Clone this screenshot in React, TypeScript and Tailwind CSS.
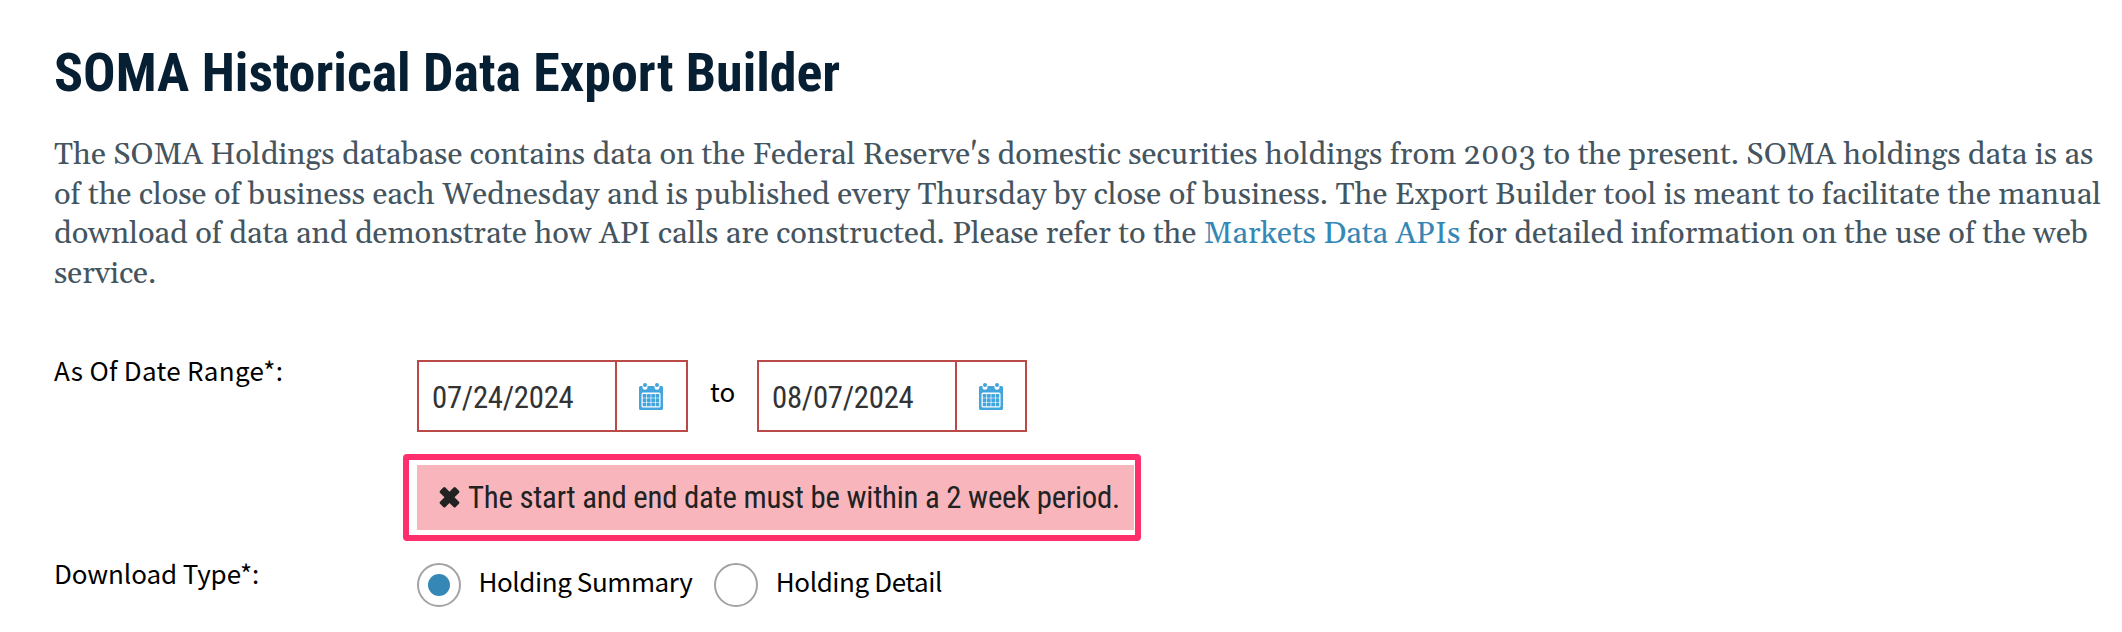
import { clsx } from 'clsx';

function CalendarIcon() {
  return (
    <svg width="24" height="27" viewBox="0 0 24 27" fill="none">
      <path d="M1.500 3h21A1.500 1.500 0 0 1 24 4.500v21a1.500 1.500 0 0 1-1.500 1.500h-21A1.500 1.500 0 0 1 0 25.500v-21A1.500 1.500 0 0 1 1.500 3z" fill="#42a5de" />
      <path d="M3.500 2h5v2.500a2.500 2.200 0 0 1-5 0zM15.500 2h5v2.500a2.500 2.200 0 0 1-5 0z" fill="#fff" />
      <circle cx="6" cy="2" r="2" fill="#42a5de" />
      <circle cx="18" cy="2" r="2" fill="#42a5de" />
      <rect x="2.500" y="9.500" width="19" height="15" rx="1.500" fill="#fff" />
      {[11, 15.3, 19.6].map((y) =>
        [3.7, 8, 12.3, 16.6].map((x) => (
          <rect key={`${x}-${y}`} x={x} y={y} width="3.700" height="3.700" rx="0.400" fill="#42a5de" />
        ))
      )}
    </svg>
  );
}

function DateField({ value, className }: { value: string; className?: string }) {
  return (
    <div className={clsx('flex h-[72px] border-2 border-[#b94a48] bg-white', className)}>
      <div className="flex w-[198px] items-center border-r-2 border-[#b94a48] pt-1 pl-[13px]">
        <span className="text-[30.8px] leading-[68px] tracking-[-0.3px] text-[#333] font-['Roboto_Condensed',Roboto,sans-serif]">
          {value}
        </span>
      </div>
      <div className="flex flex-1 items-center pt-px pl-[22px]">
        <CalendarIcon />
      </div>
    </div>
  );
}

function Radio({ label, checked }: { label: string; checked?: boolean }) {
  return (
    <label className="flex">
      <span className="flex size-11 items-center justify-center rounded-full border-2 border-[#a3a3a3]">
        {checked && <span className="size-[22px] rounded-full bg-[#3588b6]" />}
      </span>
      <span className="ml-[17.5px] text-[26px] leading-9 tracking-[-0.42px]">{label}</span>
    </label>
  );
}

export default function App() {
  return (
    <div className="h-[632px] overflow-hidden bg-white pl-[54px] text-black font-['Noto_Sans_CJK_SC',sans-serif]">
      <h1 className="pt-[41px] text-[54px] leading-[64px] font-bold tracking-[-0.03px] text-[#061f33] font-['Roboto_Condensed',Roboto,sans-serif]">
        SOMA Historical Data Export Builder
      </h1>

      <p className="mt-[31px] w-[2062px] text-[30.8px] leading-[39.6px] whitespace-nowrap text-[#455560] font-[Georgia,Gelasio,serif]">
        The SOMA Holdings database contains data on the Federal Reserve's domestic securities holdings from 2003 to the present. SOMA holdings data is as
        <br />
        of the close of business each Wednesday and is published every Thursday by close of business. The Export Builder tool is meant to facilitate the manual
        <br />
        download of data and demonstrate how API calls are constructed. Please refer to the{' '}
        <a href="#" className="text-[#3588b6]">Markets Data APIs</a> for detailed information on the use of the web
        <br />
        service.
      </p>

      <div className="mt-[65.6px] flex">
        <div className="w-[363px] text-[26px] leading-5 tracking-[0.3px]">As Of Date Range*:</div>
        <div>
          <div className="flex">
            <DateField value="07/24/2024" className="w-[271px]" />
            <span className="ml-[22px] w-[47px] text-[26px] leading-[62px]">to</span>
            <DateField value="08/07/2024" className="w-[270px]" />
          </div>
          {/* validation message */}
          <div className="-ml-3.5 mt-[22px] h-[87px] w-[738px] rounded-[4px] border-6 border-[#ff2e6c] pt-[5px] pl-2">
            <div className="flex h-[65px] w-[717px] items-center bg-[#f8b6bc] pt-px pl-[22px] text-[#222]">
              <svg width="21" height="21" viewBox="0 0 21 21" fill="currentColor">
                <path d="M4.300 0.600a1.500 1.500 0 0 1 2.100 0L10.500 4.700l4.100-4.100a1.500 1.500 0 0 1 2.100 0l3.200 3.200a1.500 1.500 0 0 1 0 2.100L15.500 10.300l4.400 4.400a1.500 1.500 0 0 1 0 2.100l-3.200 3.200a1.500 1.500 0 0 1-2.100 0L10.500 15.900l-4.100 4.100a1.500 1.500 0 0 1-2.100 0L1.100 16.800a1.500 1.500 0 0 1 0-2.100L5.500 10.300 1.100 5.900a1.500 1.500 0 0 1 0-2.100z" />
              </svg>
              <span className="ml-2 text-[30.8px] tracking-[-0.24px] font-['Roboto_Condensed',Roboto,sans-serif]">
                The start and end date must be within a 2 week period.
              </span>
            </div>
          </div>
        </div>
      </div>

      <div className="mt-[14px] flex">
        <div className="w-[363px] text-[26px] leading-9 tracking-[-0.1px]">Download Type*:</div>
        <div className="mt-2 flex gap-[22px]">
          <Radio label="Holding Summary" checked />
          <Radio label="Holding Detail" />
        </div>
      </div>
    </div>
  );
}
